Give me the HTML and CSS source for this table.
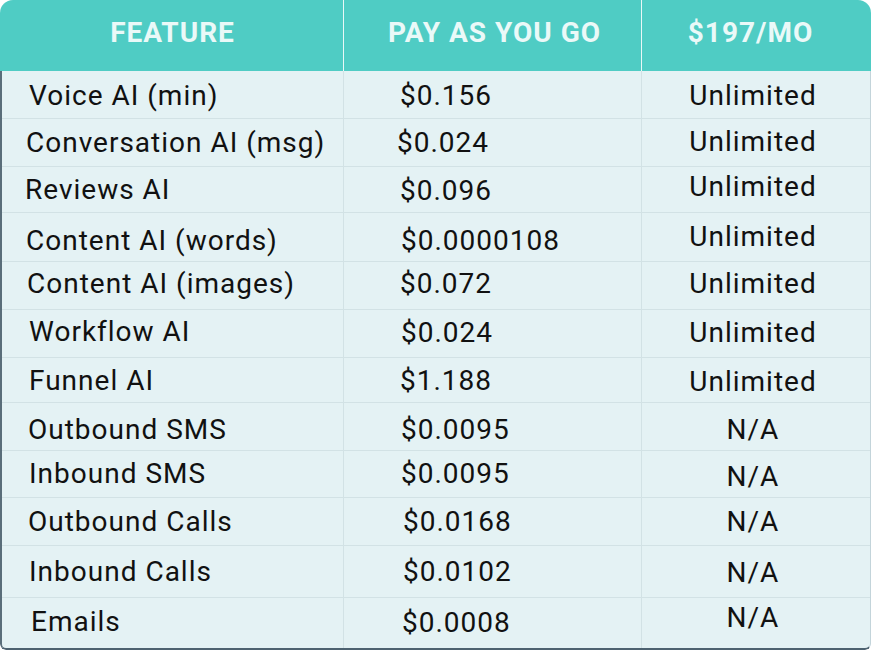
FILE: index.html
```html
<!DOCTYPE html>
<html>
<head>
<meta charset="utf-8">
<link rel="stylesheet" href="styles.css">
</head>
<body>
<div class="card">
  <div class="head">
    <div class="hc c1">FEATURE</div>
    <div class="hc c2">PAY AS YOU GO</div>
    <div class="hc c3">$197/MO</div>
  </div>
  <div class="body">
    <div class="row r48"><div class="cell c1 p27 dn1">Voice AI (min)</div><div class="cell c2 q56 dn1">$0.156</div><div class="cell c3 dn1">Unlimited</div></div>
    <div class="row r48"><div class="cell c1 p24">Conversation AI (msg)</div><div class="cell c2 q53">$0.024</div><div class="cell c3 up1">Unlimited</div></div>
    <div class="row r46"><div class="cell c1 p23">Reviews AI</div><div class="cell c2 q56 dn1">$0.096</div><div class="cell c3 up3">Unlimited</div></div>
    <div class="row r49"><div class="cell c1 p24 dn3">Content AI (words)</div><div class="cell c2 q57 dn3">$0.0000108</div><div class="cell c3 up1">Unlimited</div></div>
    <div class="row r48"><div class="cell c1 p25 up2">Content AI (images)</div><div class="cell c2 q56 up2">$0.072</div><div class="cell c3 up2">Unlimited</div></div>
    <div class="row r48"><div class="cell c1 p27 up2">Workflow AI</div><div class="cell c2 q57 up1">$0.024</div><div class="cell c3 up1">Unlimited</div></div>
    <div class="row r45"><div class="cell c1 p27">Funnel AI</div><div class="cell c2 q56">$1.188</div><div class="cell c3 dn1">Unlimited</div></div>
    <div class="row r48"><div class="cell c1 p26 dn3">Outbound SMS</div><div class="cell c2 q57 dn3">$0.0095</div><div class="cell c3 dn3">N/A</div></div>
    <div class="row r47"><div class="cell c1 p27 up1">Inbound SMS</div><div class="cell c2 q57 up1">$0.0095</div><div class="cell c3 dn2">N/A</div></div>
    <div class="row r48"><div class="cell c1 p26">Outbound Calls</div><div class="cell c2 q59">$0.0168</div><div class="cell c3">N/A</div></div>
    <div class="row r52"><div class="cell c1 p27">Inbound Calls</div><div class="cell c2 q59">$0.0102</div><div class="cell c3 dn1">N/A</div></div>
    <div class="row r52 last"><div class="cell c1 p29 up2">Emails</div><div class="cell c2 q58 up1">$0.0008</div><div class="cell c3 up6">N/A</div></div>
  </div>
</div>
</body>
</html>
```
FILE: styles.css
```css
html, body {
  margin: 0;
  padding: 0;
  background: #ffffff;
}
body {
  font-family: Roboto, "Liberation Sans", sans-serif;
}
.card {
  width: 871px;
  border-radius: 13px 13px 6px 6px;
  overflow: hidden;
}
.head {
  display: flex;
  height: 71px;
  background: #4fccc4;
}
.hc {
  display: flex;
  align-items: center;
  justify-content: center;
  padding-bottom: 7px;
  box-sizing: border-box;
  color: #eaf9f8;
  font-weight: 700;
  font-size: 28px;
  letter-spacing: 1px;
}
.head .c1 { width: 343px; padding-left: 2px; }
.head .c2 { width: 298px; border-left: 1px solid #e9f8f7; padding-left: 4px; }
.head .c3 { flex: 1; border-left: 1px solid #e9f8f7; padding-right: 12px; }
.body {
  background: #e4f2f4;
  border-left: 2px solid #5a6e7a;
  border-right: 1px solid #c3d4da;
  border-bottom: 2px solid #4d6270;
  border-radius: 0 0 6px 6px;
}
.row {
  display: flex;
  box-sizing: border-box;
  border-bottom: 1px solid #d2e2e5;
}
.row.last { border-bottom: none; }
.r45 { height: 45px; }
.r46 { height: 46px; }
.r47 { height: 47px; }
.r48 { height: 48px; }
.r49 { height: 49px; }
.r52 { height: 52px; }
.row.last.r52 { height: 50px; }
.cell {
  display: flex;
  align-items: center;
  box-sizing: border-box;
  color: #111111;
  font-size: 28px;
  letter-spacing: 1px;
}
.body .c1 { width: 341px; padding-left: 26px; }
.body .c2 { width: 298px; padding-left: 55px; border-left: 1px solid #d2e2e5; }
.body .c3 { flex: 1; justify-content: center; border-left: 1px solid #d2e2e5; padding-right: 6px; }

.body .p23 { padding-left: 23px; }
.body .p24 { padding-left: 24px; }
.body .p25 { padding-left: 25px; }
.body .p26 { padding-left: 26px; }
.body .p27 { padding-left: 27px; }
.body .p29 { padding-left: 29px; }
.body .q53 { padding-left: 53px; }
.body .q56 { padding-left: 56px; }
.body .q57 { padding-left: 57px; }
.body .q58 { padding-left: 58px; }
.body .q59 { padding-left: 59px; }

.up1 { padding-bottom: 2px; }
.up2 { padding-bottom: 4px; }
.up3 { padding-bottom: 6px; }
.up6 { padding-bottom: 12px; }
.dn1 { padding-top: 2px; }
.dn2 { padding-top: 4px; }
.dn3 { padding-top: 6px; }
```
